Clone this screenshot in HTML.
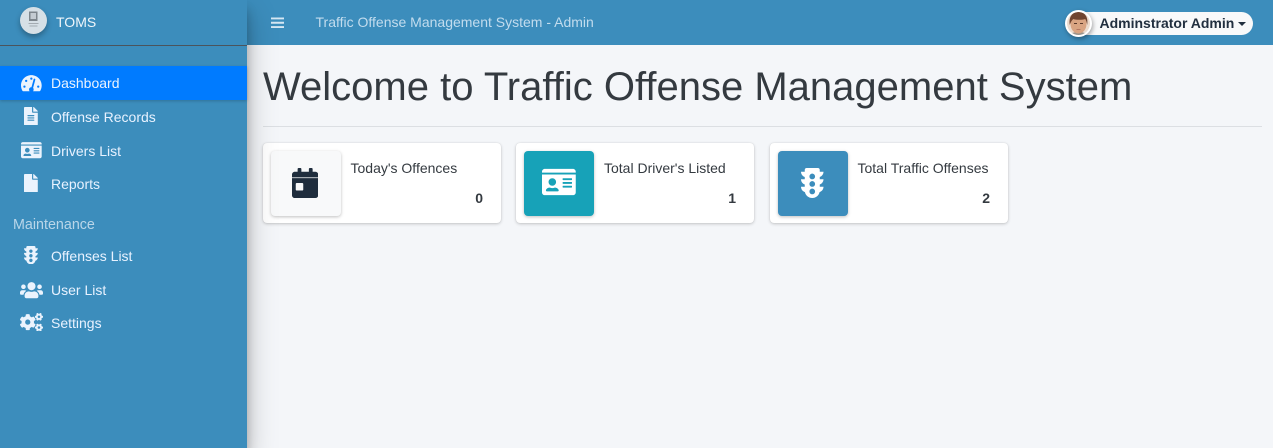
<!DOCTYPE html>
<html><head><meta charset="utf-8"><title>TOMS</title>
<style>
*{box-sizing:border-box}
html,body{margin:0;padding:0}
body{width:1273px;height:448px;overflow:hidden;background:#f4f6f9;font-family:"Liberation Sans",sans-serif;color:#343a40;position:relative}
.abs{position:absolute;white-space:nowrap}
#side{position:absolute;left:0;top:0;width:247px;height:448px;background:#3c8dbc;box-shadow:0 14px 28px rgba(0,0,0,.25),0 10px 10px rgba(0,0,0,.22);z-index:3}
#top{position:absolute;left:247px;top:0;width:1026px;height:45px;background:#3c8dbc;z-index:2}
.sep{position:absolute;left:0;top:45px;width:247px;height:1px;background:#4b545c}
.act{position:absolute;left:0;top:66px;width:247px;height:34px;background:#007bff;box-shadow:0 1px 3px rgba(0,0,0,.2)}
.nav{position:absolute;left:51px;font-size:14px;line-height:18px;color:#e8f2ff;white-space:nowrap}
.ic{position:absolute;fill:#ebf3fd}
.card{position:absolute;top:143px;width:238px;height:80px;background:#fff;border-radius:4px;box-shadow:0 0 1px rgba(0,0,0,.125),0 1px 3px rgba(0,0,0,.2)}
.box{position:absolute;left:8px;top:8px;width:70px;height:65px;border-radius:4px;box-shadow:0 1px 3px rgba(0,0,0,.25)}
.lbl{position:absolute;left:87.5px;top:16px;font-size:14px;line-height:18px;color:#343a40;white-space:nowrap}
.num{position:absolute;right:18px;top:46px;font-size:14px;line-height:18px;font-weight:700;color:#343a40}
</style></head>
<body>
<div id="side">
  <div class="abs" style="left:20px;top:7px;width:27px;height:27px;border-radius:50%;background:#d6e0e6;box-shadow:0 3px 6px rgba(0,0,0,.3)">
    <svg width="27" height="27" viewBox="0 0 27 27"><path d="M9 4.500h8.500v9.500H9z" fill="#7d868c"/><path d="M10.500 6h5.500v6h-5.500z" fill="#c4ccd2"/><path d="M8.500 16h10v1H8.500zM9.500 18.500h8v1h-8z" fill="#a3abb1"/></svg>
  </div>
  <div class="abs" style="left:56px;top:13px;font-size:14px;line-height:18px;color:#f0f6fb">TOMS</div>
  <div class="sep"></div>
  <div class="act"></div>

  <div class="nav" style="top:74px;color:#eaf3ff">Dashboard</div>
  <div class="nav" style="top:108px">Offense Records</div>
  <div class="nav" style="top:142px">Drivers List</div>
  <div class="nav" style="top:175px">Reports</div>
  <div class="abs" style="left:13px;top:216px;font-size:14.3px;line-height:18px;color:#b9d6e9">Maintenance</div>
  <div class="nav" style="top:247px">Offenses List</div>
  <div class="nav" style="top:281px">User List</div>
  <div class="nav" style="top:314px">Settings</div>

  <!-- tachometer -->
  <svg class="ic" style="left:21.3px;top:74px" width="20.7" height="18.4" viewBox="0 0 576 512"><path fill-rule="evenodd" d="M288 32C128.940 32 0 160.940 0 320c0 52.800 14.250 102.260 39.060 144.800 5.610 9.620 16.300 15.200 27.440 15.200h443c11.140 0 21.830-5.580 27.440-15.200C561.750 422.260 576 372.800 576 320c0-159.060-128.940-288-288-288zM288 96a32 32 0 1 1 0 64 32 32 0 0 1 0-64zM96 320a32 32 0 1 1 0 64 32 32 0 0 1 0-64zM144 160a32 32 0 1 1 0 64 32 32 0 0 1 0-64zM480 320a32 32 0 1 1 0 64 32 32 0 0 1 0-64zM353 144a24 24 0 0 1 46 12L337 387C346 398 352 414 352 432c0 17.500-5 33-15 48H239c-9-15-15-30-15-48 0-35 28-64 64-64h3z"/></svg>
  <!-- file-alt -->
  <svg class="ic" style="left:24.400px;top:107px" width="13.800" height="18.400" viewBox="0 0 384 512"><path d="M224 136V0H24C10.700 0 0 10.700 0 24v464c0 13.300 10.700 24 24 24h336c13.300 0 24-10.700 24-24V160H248c-13.200 0-24-10.800-24-24zm64 236c0 6.600-5.400 12-12 12H108c-6.600 0-12-5.400-12-12v-8c0-6.600 5.400-12 12-12h168c6.600 0 12 5.400 12 12v8zm0-64c0 6.600-5.400 12-12 12H108c-6.600 0-12-5.400-12-12v-8c0-6.600 5.400-12 12-12h168c6.600 0 12 5.400 12 12v8zm0-72v8c0 6.600-5.400 12-12 12H108c-6.600 0-12-5.400-12-12v-8c0-6.600 5.400-12 12-12h168c6.600 0 12 5.400 12 12zm96-114.100v6.100H256V0h6.100c6.400 0 12.500 2.500 17 7l97.900 98c4.500 4.500 7 10.600 7 16.900z"/></svg>
  <!-- id-card -->
  <svg class="ic" style="left:21.300px;top:141px" width="20.700" height="18.400" viewBox="0 0 576 512"><path d="M528 32H48C21.500 32 0 53.500 0 80v16h576V80c0-26.500-21.500-48-48-48zM0 432c0 26.500 21.500 48 48 48h480c26.500 0 48-21.500 48-48V128H0v304zm352-232c0-4.400 3.600-8 8-8h144c4.400 0 8 3.600 8 8v16c0 4.400-3.600 8-8 8H360c-4.400 0-8-3.600-8-8v-16zm0 64c0-4.400 3.600-8 8-8h144c4.400 0 8 3.600 8 8v16c0 4.400-3.600 8-8 8H360c-4.400 0-8-3.600-8-8v-16zm0 64c0-4.400 3.600-8 8-8h144c4.400 0 8 3.600 8 8v16c0 4.400-3.600 8-8 8H360c-4.400 0-8-3.600-8-8v-16zM176 192c35.300 0 64 28.700 64 64s-28.700 64-64 64-64-28.700-64-64 28.700-64 64-64zM67.100 396.200C75.500 370.500 99.600 352 128 352h8.200c12.300 5.100 25.700 8 39.800 8s27.600-2.900 39.800-8h8.200c28.400 0 52.500 18.500 60.900 44.200 3.200 9.900-5.200 19.800-15.600 19.800H82.700c-10.400 0-18.800-10-15.600-19.800z"/></svg>
  <!-- file -->
  <svg class="ic" style="left:24.400px;top:174px" width="13.800" height="18.400" viewBox="0 0 384 512"><path d="M224 136V0H24C10.700 0 0 10.700 0 24v464c0 13.300 10.700 24 24 24h336c13.300 0 24-10.700 24-24V160H248c-13.200 0-24-10.800-24-24zm160-14.100v6.100H256V0h6.100c6.400 0 12.500 2.500 17 7l97.900 98c4.500 4.500 7 10.600 7 16.900z"/></svg>
  <!-- traffic light -->
  <svg class="ic" style="left:24.400px;top:246px" width="13.800" height="18.400" viewBox="0 0 384 512"><path d="M384 192h-64v-37.880c37.200-13.220 64-48.380 64-90.120h-64V32c0-17.670-14.330-32-32-32H96C78.330 0 64 14.330 64 32v32H0c0 41.740 26.800 76.900 64 90.120V192H0c0 41.740 26.800 76.900 64 90.120V320H0c0 42.840 28.250 78.690 66.990 91.050C79.420 468.720 130.600 512 192 512s112.580-43.280 125.010-100.950C355.750 398.690 384 362.840 384 320h-64v-37.880c37.200-13.220 64-48.380 64-90.120zM192 448c-26.510 0-48-21.490-48-48s21.490-48 48-48 48 21.490 48 48-21.490 48-48 48zm0-128c-26.510 0-48-21.490-48-48s21.490-48 48-48 48 21.490 48 48-21.490 48-48 48zm0-128c-26.510 0-48-21.490-48-48s21.490-48 48-48 48 21.490 48 48-21.490 48-48 48z"/></svg>
  <!-- users -->
  <svg class="ic" style="left:20px;top:280.500px" width="23" height="18.400" viewBox="0 0 640 512"><path d="M96 224c35.300 0 64-28.700 64-64s-28.700-64-64-64-64 28.700-64 64 28.700 64 64 64zm448 0c35.300 0 64-28.700 64-64s-28.700-64-64-64-64 28.700-64 64 28.700 64 64 64zm32 32h-64c-17.600 0-33.500 7.100-45.100 18.600 40.300 22.100 68.900 62 75.100 109.400h66c17.700 0 32-14.300 32-32v-32c0-35.300-28.700-64-64-64zm-256 0c61.900 0 112-50.100 112-112S381.900 32 320 32 208 82.100 208 144s50.100 112 112 112zm76.800 32h-8.300c-20.800 10-43.900 16-68.500 16s-47.600-6-68.500-16h-8.300C179.600 288 128 339.600 128 403.200V432c0 26.500 21.500 48 48 48h288c26.500 0 48-21.500 48-48v-28.800c0-63.600-51.600-115.200-115.200-115.200zm-223.700-13.400C161.500 263.100 145.600 256 128 256H64c-35.300 0-64 28.700-64 64v32c0 17.700 14.300 32 32 32h65.900c6.300-47.400 34.900-87.300 75.200-109.400z"/></svg>
  <!-- cogs -->
  <svg class="ic" style="left:20px;top:313px" width="23" height="18.400" viewBox="0 0 640 512"><path d="M512.100 191l-8.200 14.300c-3 5.300-9.400 7.500-15.100 5.400-11.800-4.400-22.600-10.700-32.100-18.600-4.600-3.800-5.800-10.500-2.800-15.700l8.200-14.300c-6.900-8-12.300-17.300-15.900-27.400h-16.500c-6 0-11.200-4.300-12.200-10.300-2-12-2.100-24.600 0-37.100 1-6 6.200-10.400 12.200-10.400h16.500c3.600-10.100 9-19.400 15.900-27.400l-8.200-14.300c-3-5.200-1.900-11.900 2.800-15.700 9.500-7.900 20.400-14.200 32.100-18.600 5.700-2.100 12.100.1 15.100 5.400l8.200 14.300c10.500-1.900 21.200-1.900 31.700 0L552 6.300c3-5.300 9.400-7.500 15.100-5.400 11.800 4.400 22.600 10.700 32.100 18.600 4.600 3.800 5.800 10.500 2.800 15.700l-8.200 14.300c6.900 8 12.300 17.300 15.900 27.400h16.500c6 0 11.200 4.300 12.200 10.300 2 12 2.100 24.600 0 37.100-1 6-6.200 10.400-12.200 10.400h-16.500c-3.600 10.100-9 19.400-15.900 27.400l8.200 14.300c3 5.200 1.900 11.900-2.800 15.700-9.500 7.900-20.400 14.200-32.100 18.600-5.700 2.100-12.100-.1-15.100-5.400l-8.200-14.300c-10.400 1.900-21.200 1.900-31.700 0zm-10.500-58.800c38.500 29.600 82.400-14.300 52.800-52.800-38.500-29.700-82.400 14.300-52.800 52.800zM386.300 286.100l33.700 16.800c10.100 5.800 14.500 18.100 10.500 29.100-8.900 24.200-26.400 46.400-42.600 65.800-7.400 8.900-20.200 11.100-30.300 5.300l-29.100-16.800c-16 13.700-34.600 24.600-54.900 31.700v33.600c0 11.600-8.300 21.600-19.700 23.600-24.600 4.200-50.400 4.400-75.900 0-11.500-2-20-11.900-20-23.600V418c-20.300-7.200-38.900-18-54.900-31.700L74 403c-10 5.800-22.900 3.600-30.300-5.300-16.200-19.400-33.300-41.600-42.200-65.700-4-10.900.4-23.200 10.500-29.100l33.300-16.800c-3.900-20.900-3.900-42.400 0-63.400L12 205.800c-10.100-5.800-14.600-18.100-10.500-29 8.900-24.200 26-46.400 42.200-65.800 7.400-8.900 20.200-11.100 30.300-5.300l29.100 16.800c16-13.700 34.600-24.600 54.900-31.700V57.100c0-11.500 8.200-21.500 19.600-23.500 24.600-4.200 50.500-4.400 76-.1 11.500 2 20 11.900 20 23.600v33.600c20.300 7.200 38.900 18 54.900 31.700l29.100-16.800c10-5.800 22.900-3.600 30.300 5.300 16.200 19.400 33.200 41.600 42.100 65.800 4 10.900.1 23.200-10 29.100l-33.700 16.800c3.900 21 3.900 42.500 0 63.500zm-117.600 21.100c59.200-77-28.700-164.900-105.700-105.700-59.200 77 28.700 164.900 105.700 105.700zm243.400 182.700l-8.200 14.300c-3 5.300-9.400 7.500-15.100 5.400-11.800-4.400-22.600-10.700-32.100-18.600-4.600-3.800-5.800-10.500-2.800-15.700l8.200-14.300c-6.900-8-12.300-17.300-15.900-27.400h-16.500c-6 0-11.200-4.300-12.200-10.300-2-12-2.100-24.600 0-37.100 1-6 6.200-10.400 12.200-10.400h16.500c3.600-10.100 9-19.400 15.900-27.400l-8.200-14.300c-3-5.200-1.900-11.900 2.800-15.700 9.500-7.900 20.400-14.200 32.100-18.600 5.700-2.100 12.100.1 15.100 5.400l8.200 14.300c10.500-1.900 21.200-1.900 31.700 0l8.200-14.300c3-5.300 9.400-7.500 15.100-5.400 11.800 4.400 22.600 10.700 32.100 18.600 4.600 3.800 5.800 10.500 2.800 15.700l-8.200 14.300c6.900 8 12.300 17.300 15.900 27.400h16.500c6 0 11.200 4.300 12.200 10.300 2 12 2.100 24.600 0 37.100-1 6-6.200 10.400-12.200 10.400h-16.500c-3.600 10.100-9 19.400-15.900 27.400l8.200 14.300c3 5.200 1.900 11.900-2.800 15.700-9.500 7.900-20.400 14.200-32.100 18.600-5.700 2.100-12.100-.1-15.100-5.400l-8.200-14.300c-10.400 1.900-21.200 1.900-31.700 0zM501.600 431c38.500 29.600 82.400-14.300 52.800-52.800-38.500-29.600-82.400 14.300-52.800 52.800z"/></svg>
</div>

<div id="top">
  <svg class="abs" style="left:24px;top:16.500px" width="13" height="12" viewBox="0 0 13 12"><path d="M0 .5h13v1.900H0zM0 4.800h13v1.900H0zM0 9.100h13v1.900H0z" fill="#d6e7f3"/></svg>
  <div class="abs" style="left:68.500px;top:13px;font-size:14px;line-height:18px;color:#c2dcee">Traffic Offense Management System - Admin</div>
  <div class="abs" style="left:819px;top:12px;width:187px;height:23px;border-radius:12px;background:#f8f9fa"></div>
  <div class="abs" style="left:852.500px;top:14px;font-size:14px;line-height:18px;font-weight:700;color:#212f3f">Adminstrator Admin</div>
  <div class="abs" style="left:991px;top:21.500px;width:0;height:0;border-left:4.300px solid transparent;border-right:4.300px solid transparent;border-top:4.300px solid #212f3f"></div>
  <div class="abs" style="left:818px;top:10px;width:27px;height:27px;border-radius:50%;background:#fff;box-shadow:1px 2px 5px rgba(0,0,0,.35)">
    <svg width="27" height="27" viewBox="0 0 27 27" style="display:block"><defs><clipPath id="c"><circle cx="13.500" cy="13.500" r="11.500"/></clipPath></defs><g clip-path="url(#c)"><rect width="27" height="27" fill="#ecdccf"/><path d="M4 27c1-4 5-5 9.500-5s8.500 1 9.500 5z" fill="#9a948c"/><ellipse cx="13.500" cy="14" rx="8" ry="9.500" fill="#d9a482"/><path d="M4.800 15C3.500 6.500 7.500 2 13.500 2S23.500 6.500 22.200 15c-.5-2.500-1-4.500-2-6-2.500 1-9 1-12 0-1.500 1.500-2.800 3.500-3.400 6z" fill="#6f4430"/><path d="M9 13h3v1H9zM15 13h3v1h-3z" fill="#5a3a2c"/><path d="M11.500 19h4v.8h-4z" fill="#a86a58"/></g></svg>
  </div>
</div>

<div class="abs" style="left:263px;top:62.500px;font-size:40px;line-height:48px;color:#343a40">Welcome to Traffic Offense Management System</div>
<div class="abs" style="left:263px;top:126px;width:999px;height:1px;background:#dcdfe3"></div>

<div class="card" style="left:263px">
  <div class="box" style="background:#f8f9fa"></div>
  <svg class="abs" style="left:29px;top:25px" width="26.250" height="30" viewBox="0 0 448 512"><path d="M0 464c0 26.500 21.500 48 48 48h352c26.500 0 48-21.500 48-48V172H0v292zm64-192c0-8.800 7.200-16 16-16h96c8.800 0 16 7.200 16 16v96c0 8.800-7.200 16-16 16H80c-8.800 0-16-7.200-16-16v-96zM400 64h-48V16c0-8.800-7.200-16-16-16h-32c-8.800 0-16 7.200-16 16v48H160V16c0-8.800-7.200-16-16-16h-32c-8.800 0-16 7.200-16 16v48H48C21.500 64 0 85.500 0 112v48h448v-48c0-26.500-21.500-48-48-48z" fill="#1f2d3d"/></svg>
  <div class="lbl">Today's Offences</div><div class="num">0</div>
</div>
<div class="card" style="left:516px">
  <div class="box" style="background:#17a2b8"></div>
  <svg class="abs" style="left:26px;top:24px" width="33.750" height="30" viewBox="0 0 576 512"><path d="M528 32H48C21.500 32 0 53.500 0 80v16h576V80c0-26.500-21.500-48-48-48zM0 432c0 26.500 21.500 48 48 48h480c26.500 0 48-21.500 48-48V128H0v304zm352-232c0-4.400 3.600-8 8-8h144c4.400 0 8 3.600 8 8v16c0 4.400-3.600 8-8 8H360c-4.400 0-8-3.600-8-8v-16zm0 64c0-4.400 3.600-8 8-8h144c4.400 0 8 3.600 8 8v16c0 4.400-3.600 8-8 8H360c-4.400 0-8-3.600-8-8v-16zm0 64c0-4.400 3.600-8 8-8h144c4.400 0 8 3.600 8 8v16c0 4.400-3.600 8-8 8H360c-4.400 0-8-3.600-8-8v-16zM176 192c35.300 0 64 28.700 64 64s-28.700 64-64 64-64-28.700-64-64 28.700-64 64-64zM67.100 396.200C75.500 370.500 99.600 352 128 352h8.200c12.300 5.100 25.700 8 39.800 8s27.600-2.900 39.800-8h8.200c28.400 0 52.500 18.500 60.900 44.200 3.200 9.900-5.200 19.800-15.600 19.800H82.700c-10.400 0-18.800-10-15.600-19.800z" fill="#fff"/></svg>
  <div class="lbl" style="left:88px">Total Driver's Listed</div><div class="num">1</div>
</div>
<div class="card" style="left:770px">
  <div class="box" style="background:#3c8dbc"></div>
  <svg class="abs" style="left:31px;top:25px" width="22.500" height="30" viewBox="0 0 384 512"><path d="M384 192h-64v-37.880c37.200-13.220 64-48.380 64-90.120h-64V32c0-17.670-14.330-32-32-32H96C78.330 0 64 14.330 64 32v32H0c0 41.740 26.800 76.900 64 90.120V192H0c0 41.740 26.800 76.900 64 90.120V320H0c0 42.840 28.250 78.690 66.990 91.050C79.420 468.720 130.600 512 192 512s112.580-43.280 125.010-100.950C355.750 398.690 384 362.840 384 320h-64v-37.880c37.200-13.220 64-48.380 64-90.120zM192 448c-26.510 0-48-21.490-48-48s21.490-48 48-48 48 21.490 48 48-21.490 48-48 48zm0-128c-26.510 0-48-21.490-48-48s21.490-48 48-48 48 21.490 48 48-21.490 48-48 48zm0-128c-26.510 0-48-21.490-48-48s21.490-48 48-48 48 21.490 48 48-21.490 48-48 48z" fill="#fff"/></svg>
  <div class="lbl">Total Traffic Offenses</div><div class="num">2</div>
</div>
</body></html>
